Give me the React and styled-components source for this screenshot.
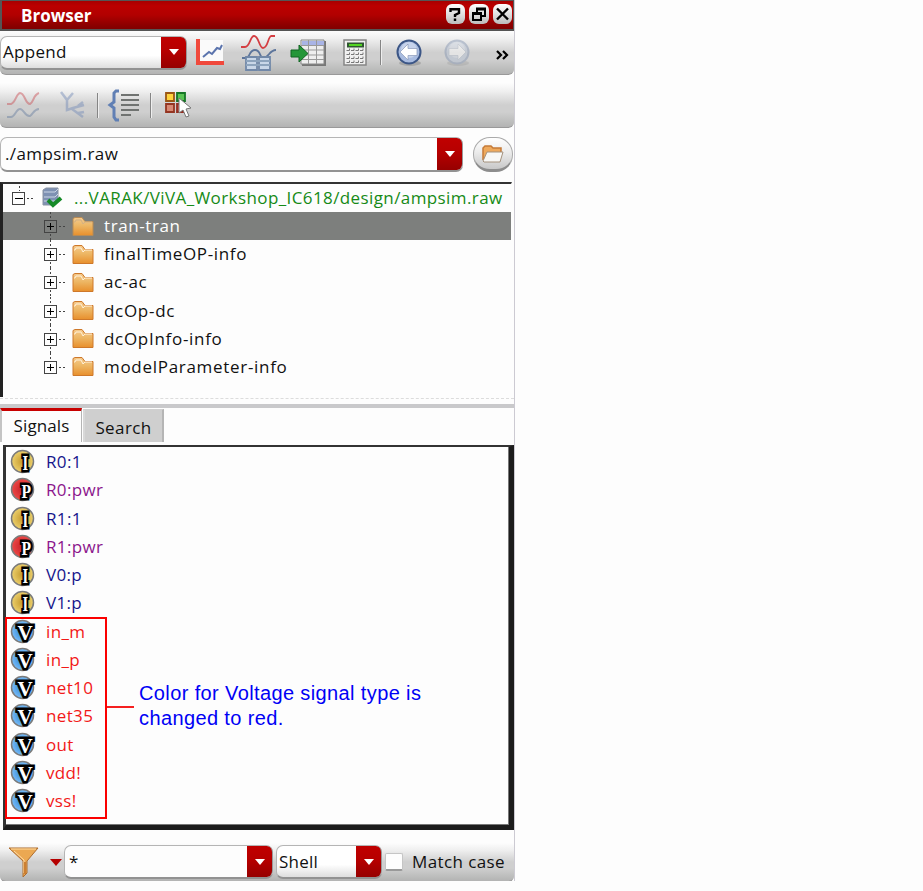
import React from "react";
import styled, { createGlobalStyle, css } from "styled-components";

const GlobalStyle = createGlobalStyle`
  * { box-sizing: border-box; }
  body { margin: 0; background: #fdfdfd; font-family: "Open Sans", "Noto Sans", sans-serif; font-size: 17px; color: #111; }
  svg { display: block; flex: none; overflow: visible; }
`;

const steel = "linear-gradient(#fdfdfd 0%, #f0f0f0 18%, #cfcfcf 50%, #cfcfcf 66%, #b9bab9 92%, #b3b3b3 100%)";
const red = "linear-gradient(#c00000, #b60000 45%, #960000)";

const Panel = styled.main`
  width: 515px;
  height: 881px;
  border-right: 1px solid #cccad2;
  display: flex;
  flex-direction: column;
  overflow: hidden;
`;
const TitleBar = styled.header`
  height: 31px;
  flex: none;
  display: flex;
  align-items: center;
  padding: 0 1px 2px 19px;
  border: 1px solid #555;
  border-width: 1px 1px 2px 2px;
  background: linear-gradient(#a80000, #bb0000 18%, #b20000 50%, #8d0000 85%, #800000);
  color: #fff;
`;
const Text = styled.span`
  white-space: pre;
  line-height: 28px;
  letter-spacing: ${(p) => p.$track || 0}px;
  color: ${(p) => p.$color || "inherit"};
`;
const Title = styled.h1`
  margin: 4px auto 0 0;
  font-size: 17px;
  line-height: 28px;
  letter-spacing: 0;
`;
const WindowButtons = styled.div`
  display: flex;
  gap: 4px;
`;
const WindowButton = styled.button`
  width: 19.5px;
  height: 20px;
  padding: 0;
  border: 0;
  border-radius: 6px;
  background: linear-gradient(#fff, #ddd 55%, #bbb);
  display: flex;
  align-items: center;
  justify-content: center;
`;
const Toolbar = styled.div`
  height: ${(p) => p.$h}px;
  flex: none;
  margin-top: ${(p) => p.$before || 0}px;
  margin-bottom: ${(p) => p.$after || 0}px;
  padding: ${(p) => p.$pad || "0"};
  display: flex;
  align-items: center;
  background: ${steel};
  border-bottom: 1px solid #999;
  border-radius: 0 0 6px 6px;
`;
const Slot = styled.span`
  margin-left: ${(p) => p.$gap || 0}px;
  opacity: ${(p) => (p.$off ? 0.45 : 1)};
`;
const Divider = styled.i`
  width: 2px;
  height: 25px;
  margin-left: ${(p) => p.$gap}px;
  border-left: 1px solid #858585;
  border-right: 1px solid #eee;
`;
const Combo = styled.div`
  width: ${(p) => p.$w}px;
  height: ${(p) => p.$h || 34}px;
  flex: none;
  margin-left: ${(p) => p.$gap || 0}px;
  padding-left: ${(p) => p.$inset || 2}px;
  display: flex;
  align-items: center;
  justify-content: space-between;
  background: ${(p) => (p.$shaded ? "linear-gradient(#fff 60%, #dedede)" : "#fdfdfd")};
  border: 1px solid #b5b5b5;
  border-bottom: 2px solid #929292;
  border-right: 0;
  border-radius: 7px;
`;
const ComboButton = styled.span`
  width: 26px;
  align-self: stretch;
  display: flex;
  align-items: center;
  justify-content: center;
  background: ${red};
  border-radius: 0 6px 6px 0;
  border-right: 1px solid #999;
`;
const PathRow = styled.div`
  display: flex;
  height: 54px;
  flex: none;
  padding-top: 9px;
`;
const OpenButton = styled.button`
  width: 40px;
  height: 35px;
  margin-left: 10px;
  padding: 0;
  border: 1px solid #aaa;
  border-bottom: 3px solid #8d8d8d;
  border-radius: 17px;
  background: linear-gradient(#fff, #ececec 45%, #c8c8c8);
  display: flex;
  align-items: center;
  justify-content: center;
`;
const Tree = styled.section`
  height: 215px;
  flex: none;
  margin-right: 2px;
  border-top: 2px solid #333;
  border-left: 3px solid #222;
  border-right: 1px solid #fdfdfd;
`;
const TreeRow = styled.div`
  height: 28.15px;
  display: flex;
  align-items: center;
  padding-left: ${(p) => (p.$root ? 9 : 41)}px;
  ${(p) => p.$selected && css`background: #7d7f7d; color: #fff;`}
`;
const TreeText = styled(Text)`
  margin-left: ${(p) => p.$gap || 10}px;
`;
const Splitter = styled.div`
  height: 11px;
  flex: none;
  border-bottom: 4px solid #c9c9cb;
  padding-top: 1px;
  &::before { content: ""; display: block; border-top: 1px dashed #dcdcdc; }
`;
const Tabs = styled.nav`
  height: 37px;
  flex: none;
  display: flex;
  align-items: flex-start;
`;
const Tab = styled.span`
  height: ${(p) => (p.$active ? 34 : 33)}px;
  width: ${(p) => (p.$active ? 82 : 81)}px;
  margin-left: ${(p) => (p.$active ? 0 : 1)}px;
  margin-top: ${(p) => (p.$active ? 0 : 1)}px;
  display: flex;
  justify-content: center;
  padding-top: ${(p) => (p.$active ? 1 : 4)}px;
  border-right: 2px solid #b5b5b5;
  border-left: 2px solid ${(p) => (p.$active ? "#c4c4c4" : "#d8d8d8")};
  ${(p) => (p.$active
    ? css`border-top: 3px solid #c80000; border-right-width: 1px;`
    : css`background: #cfcfcf; border-top: 1px solid #d0d0d0;`)}
`;
const SignalFrame = styled.section`
  height: 385px;
  flex: none;
  margin-left: 3px;
  border: 2px solid #333;
  border-left-width: 3px;
  border-right: 5px solid #1c1c1c;
  border-bottom: 5px solid #1c1c1c;
  box-shadow: inset -1px -1px #777;
  display: flex;
  align-items: flex-start;
  position: relative;
`;
const SignalList = styled.div`
  padding-top: 1px;
`;
const SignalRow = styled.div`
  height: 28.25px;
  display: flex;
  align-items: center;
  gap: 11px;
  padding-left: 5px;
`;
const Highlight = styled.div`
  position: absolute;
  left: -1px;
  top: 170px;
  width: 102px;
  height: 202px;
  border: 2px solid #fb0000;
`;
const Callout = styled.div`
  position: absolute;
  left: 101px;
  top: 234px;
  display: flex;
  font: 20px/25px "Liberation Sans", sans-serif;
  letter-spacing: 0.38px;
  color: #0000f5;
  white-space: pre;
`;
const CalloutLine = styled.i`
  width: 27px;
  height: 2px;
  margin: 25px 5px 0 0;
  background: #f52020;
`;
const CheckBox = styled.span`
  width: 18px;
  height: 18px;
  margin: 0 9px 0 3px;
  background: #fdfdfd;
  border: 1px solid #c5c5c5;
  border-bottom: 2px solid #999;
  border-radius: 2px;
`;

const Arrow = () => (
  <svg width="10" height="6"><path d="M0 0h10L5 6z" fill="#fff" /></svg>
);
const Dropdown = ({ children, track, ...props }) => (
  <Combo {...props}>
    <Text $track={track}>{children}</Text>
    <ComboButton><Arrow /></ComboButton>
  </Combo>
);

const HelpIcon = () => (
  <svg width="12" height="14" fill="none" stroke="#000" strokeWidth="2.4"><path d="M1.5 5V2.2H10V6L6 8v2M6 11.6V14" /></svg>
);
const RestoreIcon = () => (
  <svg width="14" height="14" fill="none" stroke="#000"><path d="M5 5V1.5h8V9h-3M4.500 2.500H13" strokeWidth="2" /><path d="M1 6h8v7H1zM1 7h8" strokeWidth="2" /></svg>
);
const CloseIcon = () => (
  <svg width="13" height="12" stroke="#000" strokeWidth="2.4"><path d="M1 0.500l11 11M12 .5l-11 11" /></svg>
);
const ChartIcon = () => (
  <svg width="28" height="27"><path d="M4 1h23v22H4z" fill="#fafafa" /><path d="M2 0v24h26" fill="none" stroke="#f0493c" strokeWidth="4" /><path d="M7 18l6-5 3 2 5-6 3 1 2-4" fill="none" stroke="#5b74ad" strokeWidth="2" /></svg>
);
const WavesIcon = () => (
  <svg width="34" height="36" fill="none" strokeWidth="1.8">
    <path d="M0 12h4C9 12 9 1 13 1c5 0 5 12 9 12 5 0 5-11 8-12h4" stroke="#d43e42" />
    <path d="M1 23h4c4 0 3-8 9-8s4 7 8 8c6 0 6-8 13-8" stroke="#5d759b" />
    <path d="M5 22h11v13H5zM18 22h11v13H18z" fill="#c9d7e8" stroke="#7188a8" />
    <path d="M5 26h24M5 30h24" stroke="#8da4bd" />
  </svg>
);
const TableIcon = () => (
  <svg width="36" height="28"><path d="M12 2h24v25H12z" fill="#777" /><path d="M11 1h23v24H11z" fill="#eee" stroke="#888" /><path d="M12 2h22v4H12z" fill="#a9b4e6" /><path d="M11 6.500h23M11 11h23M11 16h23M11 20.500h23M18.500 1v24M26.500 1v24" stroke="#999" /><path d="M1 11h8V6l9 8.500-9 8.500v-5H1z" fill="#249638" stroke="#116422" /></svg>
);
const CalculatorIcon = () => (
  <svg width="24" height="27">
    <path d="M1 1h22v25H1z" fill="#f0f0f0" stroke="#858585" strokeWidth="1.500" />
    <path d="M4 3.500h17v5H4z" fill="#305532" /><path d="M6 6h13" stroke="#52d522" strokeWidth="2" />
    {[12, 16, 20, 24].map((y) => (
      <g key={y}>{[3.5, 8, 12.5, 17].map((x) => <path key={x} d={`M${x} ${y - 0.500}h3v-2`} fill="none" stroke="#777" />)}</g>
    ))}
  </svg>
);
const NavIcon = ({ forward }) => (
  <svg width="27" height="28"><ellipse cx="14" cy="24" rx="11" ry="3" fill="#888" opacity=".5" /><circle cx="13" cy="13" r="11.500" fill={forward ? "#b4c1d5" : "#a9bce0"} stroke={forward ? "#8192b0" : "#3c5686"} strokeWidth="2" /><circle cx="13" cy="11" r="8" fill="#fff" opacity=".35" /><path d={forward ? "M22 13l-8-8v4.500H5v7h9V21z" : "M4 13l8-8v4.500h9v7h-9V21z"} fill="#fff" stroke={forward ? "#a1acbd" : "#8898b8"} strokeWidth=".7" /></svg>
);
const FadedWaves = () => (
  <svg width="34" height="26" fill="none" strokeWidth="2"><path d="M1 12h4C10 10 10 2 14 1c5 0 5 11 10 11C28 10 27 3 33 1" stroke="#c94b51" /><path d="M1 25h4c4 0 5-8 9-8s5 8 10 7c3-2 4-7 9-7" stroke="#667da0" /></svg>
);
const ForkIcon = () => (
  <svg width="27" height="26" fill="none" stroke="#7189b7" strokeWidth="2.500"><path d="M1 0l6 8v10l6-2 11-3M13 1L7 8M12 17l11 8M18 14l5-4M18 21l6-1" /></svg>
);
const BracesIcon = () => (
  <svg width="31" height="31" fill="none"><path d="M10 1H7L5 3v9l-4 3 4 3v9l2 3h3" stroke="#607fb4" strokeWidth="3" /><path d="M12 5h18M12 10h18M12 15h18M12 20h18M12 25h10" stroke="#707371" strokeWidth="2" /></svg>
);
const BlocksIcon = () => (
  <svg width="27" height="27" strokeWidth="1.8"><path d="M1 1h8v8H1z" fill="#ffd33d" stroke="#9a5615" /><path d="M12 1h8v8h-8z" fill="#5ac454" stroke="#167626" /><path d="M1 12h8v8H1z" fill="#d88975" stroke="#943522" /><path d="M12 12h8v8h-8z" fill="#d54e42" stroke="#942f22" /><path d="M14 6v15l4-3 3 7 3-1-3-7 5-1z" fill="#fff" stroke="#777" strokeWidth="1" /></svg>
);
const FolderGradients = () => (
  <defs><linearGradient id="folderFill" x2="0" y2="1"><stop stopColor="#f6cb8e" /><stop offset=".45" stopColor="#edb765" /><stop offset="1" stopColor="#e88f2c" /></linearGradient></defs>
);
const FolderIcon = ({ dim }) => (
  <svg width="22" height="19"><FolderGradients /><path d="M1 1.500L3 .5h7l3 4h8v14H1z" fill="url(#folderFill)" stroke={dim ? "#b88b55" : "#ce782a"} /><path d="M2 5h1l1-2h5l2 4 2-2h7" fill="none" stroke={dim ? "#d3b184" : "#fff1d9"} /></svg>
);
const OpenFolderIcon = () => (
  <svg width="22" height="18"><path d="M1 15V3l2-2h6l2 2h8v5" fill="#eea95c" stroke="#c57a37" strokeWidth="1.500" /><path d="M1 16L5 7h16l-3 10H2z" fill="#f8f8f6" stroke="#a4917c" /></svg>
);
const DatabaseIcon = () => (
  <svg width="20" height="20"><path d="M1 2l3-2h12v14l-3 3H1z" fill="#7e91b3" stroke="#8993a3" /><path d="M2 4h11l3-3M2 9h11l3-3M2 13h11" stroke="#cbd5e5" fill="none" /><path d="M6 12l5 5 8-7" fill="none" stroke="#168a28" strokeWidth="4" /></svg>
);
const Expander = ({ open, selected, last }) => (
  <svg width="20" height="28" fill="none" shapeRendering="crispEdges">
    {!open && <path d={last ? "M6.500 0v7" : "M6.500 0v7M6.500 22v6"} stroke="#444" strokeDasharray="2 2" />}
    {open && <path d="M7.500 2v5" stroke="#444" strokeDasharray="2 2" />}
    <path d="M.5 8.500h12v12H.5z" fill={selected ? "none" : "#fdfdfd"} stroke="#444" strokeWidth="1" />
    <path d={open ? "M3 14.500h8" : "M3 14.500h7M6.500 11v7"} stroke="#000" strokeWidth="1.500" />
    <path d="M15 14.500h6" stroke="#444" strokeDasharray="2 2" />
  </svg>
);

const signalStyles = {
  I: { edge: "#ecd06c", core: "#c4992d", place: "translate(11.500 20) scale(.72 1)", size: 20 },
  P: { edge: "#ee4947", core: "#c41f28", place: "translate(10.500 20) scale(.82 1)", size: 19 },
  V: { edge: "#79bdf8", core: "#287fd1", place: "translate(6.500 20) scale(1 1)", size: 21 },
};
const Letter = styled.text`
  font: bold ${(p) => p.$size}px "Liberation Serif", serif;
  fill: #fff;
  stroke: #000;
  stroke-width: 5px;
  stroke-linejoin: miter;
  paint-order: stroke;
`;
const SignalIcon = ({ type }) => {
  const { edge, core, place, size } = signalStyles[type];
  return (
    <svg width="24" height="24">
      <defs><radialGradient id={`badge${type}`}><stop stopColor={core} /><stop offset="1" stopColor={edge} /></radialGradient></defs>
      <circle cx="11.500" cy="11.500" r="11" fill={`url(#badge${type})`} stroke="#7b7b7b" strokeWidth="1.500" />
      <Letter transform={place} $size={size}>{type}</Letter>
    </svg>
  );
};
const FilterIcon = () => (
  <svg width="31" height="31"><path d="M1 1h29L19 14v12l-4 4V14z" fill="#eba852" stroke="#ad6c2f" /><path d="M3 2h25M6 4l10 9v13" stroke="#ffdba3" fill="none" /><path d="M17 15v12" stroke="#cc7f32" strokeWidth="2" /></svg>
);

const folders = [
  ["tran-tran", 0.6], ["finalTimeOP-info", 0.65], ["ac-ac", 0.5],
  ["dcOp-dc", 0.7], ["dcOpInfo-info", 0.7], ["modelParameter-info", 0.7],
];
const signals = [
  ["I", "R0:1"], ["P", "R0:pwr"], ["I", "R1:1"], ["P", "R1:pwr"], ["I", "V0:p"], ["I", "V1:p"],
  ["V", "in_m"], ["V", "in_p"], ["V", "net10"], ["V", "net35"], ["V", "out"], ["V", "vdd!"], ["V", "vss!"],
];
const labelColors = { I: "#16168c", P: "#8c168c", V: "#f21818" };

export default function App() {
  return (
    <>
      <GlobalStyle />
      <Panel>
        <TitleBar>
          <Title>Browser</Title>
          <WindowButtons>
            <WindowButton><HelpIcon /></WindowButton>
            <WindowButton><RestoreIcon /></WindowButton>
            <WindowButton><CloseIcon /></WindowButton>
          </WindowButtons>
        </TitleBar>
        <Toolbar $h={44} $after={8}>
          <Dropdown $w={187} $shaded track={0.3}>Append</Dropdown>
          <Slot $gap={9}><ChartIcon /></Slot>
          <Slot $gap={17}><WavesIcon /></Slot>
          <Slot $gap={15}><TableIcon /></Slot>
          <Slot $gap={17}><CalculatorIcon /></Slot>
          <Divider $gap={13} />
          <Slot $gap={14}><NavIcon /></Slot>
          <Slot $gap={21} $off><NavIcon forward /></Slot>
          <Slot $gap={25}><svg width="13" height="10" fill="none" stroke="#000" strokeWidth="2.200"><path d="M1 3l4 4-4 4M7 3l4 4-4 4" /></svg></Slot>
        </Toolbar>
        <Toolbar $h={45} $pad="0 0 0 6px">
          <Slot $off><FadedWaves /></Slot>
          <Slot $gap={20} $off><ForkIcon /></Slot>
          <Divider $gap={10} />
          <Slot $gap={10}><BracesIcon /></Slot>
          <Divider $gap={10} />
          <Slot $gap={13}><BlocksIcon /></Slot>
        </Toolbar>
        <PathRow>
          <Dropdown $w={463} $h={35} $inset={4} track={0.4}>./ampsim.raw</Dropdown>
          <OpenButton><OpenFolderIcon /></OpenButton>
        </PathRow>
        <Tree>
          <TreeRow $root>
            <Expander open />
            <Slot $gap={10}><DatabaseIcon /></Slot>
            <TreeText $gap={12} $track={0.4} $color="#168a16">...VARAK/ViVA_Workshop_IC618/design/ampsim.raw</TreeText>
          </TreeRow>
          {folders.map(([name, track], i) => (
            <TreeRow key={name} $selected={i === 0}>
              <Expander selected={i === 0} last={i === folders.length - 1} />
              <Slot $gap={8}><FolderIcon dim={i === 0} /></Slot>
              <TreeText $track={track}>{name}</TreeText>
            </TreeRow>
          ))}
        </Tree>
        <Splitter />
        <Tabs>
          <Tab $active><Text $track={0.1}>Signals</Text></Tab>
          <Tab><Text $track={0.4}>Search</Text></Tab>
        </Tabs>
        <SignalFrame>
          <SignalList>
            {signals.map(([type, name]) => (
              <SignalRow key={name}>
                <SignalIcon type={type} />
                <Text $color={labelColors[type]} $track={0.35}>{name}</Text>
              </SignalRow>
            ))}
          </SignalList>
          <Highlight />
          <Callout><CalloutLine />{"Color for Voltage signal type is\nchanged to red."}</Callout>
        </SignalFrame>
        <Toolbar as="footer" $h={39} $before={13} $pad="0 0 0 8px">
          <FilterIcon />
          <Slot $gap={11}><svg width="12" height="7"><path d="M0 0h12L6 7z" fill="#b50000" /></svg></Slot>
          <Dropdown $w={209} $gap={2} $inset={4}>*</Dropdown>
          <Dropdown $w={106} $gap={3} $shaded track={0.2}>Shell</Dropdown>
          <CheckBox />
          <Text $track={0.4}>Match case</Text>
        </Toolbar>
      </Panel>
    </>
  );
}
